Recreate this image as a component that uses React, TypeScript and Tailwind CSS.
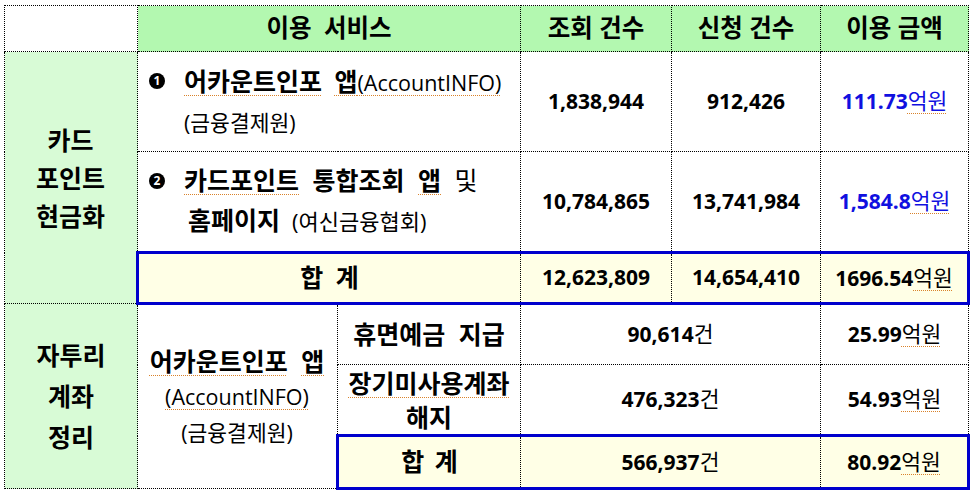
import React from "react";

// shared cell styles
const cell = "border border-dotted border-black p-0 align-middle";
const total =
  "bg-[#ffffe6] border-t-[3px]! border-b-[3px]! border-t-[#0000cc]! border-b-[#0000cc]! [border-top-style:solid]! [border-bottom-style:solid]!";
const totalLeft = "border-l-[3px]! border-l-[#0000cc]! [border-left-style:solid]!";
const totalRight = "border-r-[3px]! border-r-[#0000cc]! [border-right-style:solid]!";
const spell = "underline decoration-dotted decoration-[#d9822b] decoration-1 underline-offset-[4px]";

function Num({ value, unit, blue }: { value: string; unit?: string; blue?: boolean }) {
  return (
    <span className={`text-[21px] font-bold ${blue ? "text-[#1010e0]" : "text-black"}`}>
      {value}
      {unit && (
        <span className={`text-[21.5px] font-normal ${unit === "억원" ? spell : ""}`}>{unit}</span>
      )}
    </span>
  );
}

function Badge({ n }: { n: string }) {
  return (
    <span className="mt-[11px] mr-[19px] flex h-[16px] w-[16px] shrink-0 items-center justify-center rounded-full bg-black text-[12px] leading-none font-bold text-white">
      {n}
    </span>
  );
}

export default function App() {
  return (
    <div className="min-h-[498px] w-[978px] bg-white pl-[4px] pt-[5px] font-['Open_Sans','Noto_Sans_CJK_KR',sans-serif] text-black">
      <table className="w-[964px] table-fixed border-collapse">
        <colgroup>
          <col className="w-[133px]" />
          <col className="w-[200px]" />
          <col className="w-[183px]" />
          <col className="w-[151px]" />
          <col className="w-[149px]" />
          <col className="w-[148px]" />
        </colgroup>
        <tbody>
          {/* header */}
          <tr className="h-[46px]">
            <td className={`${cell} bg-white`}></td>
            <td colSpan={2} className={`${cell} bg-[#b3f8b0] text-center text-[24.5px] font-bold [word-spacing:6px]`}>
              이용 서비스
            </td>
            <td className={`${cell} bg-[#b3f8b0] text-center text-[24.5px] font-bold`}>조회 건수</td>
            <td className={`${cell} bg-[#b3f8b0] text-center text-[24.5px] font-bold`}>신청 건수</td>
            <td className={`${cell} bg-[#b3f8b0] text-center text-[24.5px] font-bold`}>이용 금액</td>
          </tr>

          {/* 카드포인트 현금화 */}
          <tr className="h-[100px]">
            <td rowSpan={3} className={`${cell} bg-[#d8fbd6] text-center text-[25px] font-bold leading-[38px]`}>
              카드
              <br />
              포인트
              <br />
              현금화
            </td>
            <td colSpan={2} className={cell}>
              <div className="flex pl-[11px]">
                <Badge n="1" />
                <div className="leading-[38px]">
                  <div className="[word-spacing:6px]">
                    <span className={`text-[25px] font-bold ${spell}`}>어카운트인포</span>
                    <span className="text-[25px] font-bold"> </span>
                    <span className={`text-[25px] font-bold ${spell}`}>앱</span>
                    <span className={`text-[21.5px] ${spell}`}>(AccountINFO)</span>
                  </div>
                  <div className="text-[21.5px]">(금융결제원)</div>
                </div>
              </div>
            </td>
            <td className={`${cell} text-center`}>
              <Num value="1,838,944" />
            </td>
            <td className={`${cell} text-center`}>
              <Num value="912,426" />
            </td>
            <td className={`${cell} text-center`}>
              <Num value="111.73" unit="억원" blue />
            </td>
          </tr>
          <tr className="h-[101px]">
            <td colSpan={2} className={cell}>
              <div className="flex pl-[11px]">
                <Badge n="2" />
                <div className="leading-[36px]">
                  <div className="[word-spacing:7px]">
                    <span className={`text-[25px] font-bold ${spell}`}>카드포인트</span>
                    <span className="text-[25px] font-bold"> 통합조회 </span>
                    <span className={`text-[25px] font-bold ${spell}`}>앱</span>
                    <span className="text-[25px]"> 및</span>
                  </div>
                  <div className="pl-[4px]">
                    <span className="text-[25px] font-bold">홈페이지</span>
                    <span className="ml-[12px] text-[22px]">(여신금융협회)</span>
                  </div>
                </div>
              </div>
            </td>
            <td className={`${cell} text-center`}>
              <Num value="10,784,865" />
            </td>
            <td className={`${cell} text-center`}>
              <Num value="13,741,984" />
            </td>
            <td className={`${cell} text-center`}>
              <Num value="1,584.8" unit="억원" blue />
            </td>
          </tr>
          <tr className="h-[51px]">
            <td colSpan={2} className={`${cell} ${total} ${totalLeft} text-center text-[25px] font-bold [word-spacing:6px]`}>
              합 계
            </td>
            <td className={`${cell} ${total} text-center`}>
              <Num value="12,623,809" />
            </td>
            <td className={`${cell} ${total} text-center`}>
              <Num value="14,654,410" />
            </td>
            <td className={`${cell} ${total} ${totalRight} text-center`}>
              <Num value="1696.54" unit="억원" />
            </td>
          </tr>

          {/* 자투리 계좌 정리 */}
          <tr className="h-[61px]">
            <td rowSpan={3} className={`${cell} bg-[#d8fbd6] text-center text-[25px] font-bold leading-[41px]`}>
              자투리
              <br />
              계좌
              <br />
              정리
            </td>
            <td rowSpan={3} className={`${cell} text-center leading-[36px]`}>
              <div className="text-[25px] font-bold [word-spacing:7px]">
                <span className={spell}>어카운트인포</span> <span className={spell}>앱</span>
              </div>
              <div className={`text-[21.5px] ${spell}`}>(AccountINFO)</div>
              <div className="text-[21.5px]">(금융결제원)</div>
            </td>
            <td className={`${cell} text-center text-[25px] font-bold [word-spacing:7px]`}>휴면예금 지급</td>
            <td colSpan={2} className={`${cell} text-center`}>
              <Num value="90,614" unit="건" />
            </td>
            <td className={`${cell} text-center`}>
              <Num value="25.99" unit="억원" />
            </td>
          </tr>
          <tr className="h-[71px]">
            <td className={`${cell} text-center text-[25px] font-bold leading-[34px]`}>
              <span className={spell}>장기미사용계좌</span>
              <br />
              해지
            </td>
            <td colSpan={2} className={`${cell} text-center`}>
              <Num value="476,323" unit="건" />
            </td>
            <td className={`${cell} text-center`}>
              <Num value="54.93" unit="억원" />
            </td>
          </tr>
          <tr className="h-[53px]">
            <td className={`${cell} ${total} ${totalLeft} text-center text-[25px] font-bold [word-spacing:4px]`}>합 계</td>
            <td colSpan={2} className={`${cell} ${total} text-center`}>
              <Num value="566,937" unit="건" />
            </td>
            <td className={`${cell} ${total} ${totalRight} text-center`}>
              <Num value="80.92" unit="억원" />
            </td>
          </tr>
        </tbody>
      </table>
    </div>
  );
}
